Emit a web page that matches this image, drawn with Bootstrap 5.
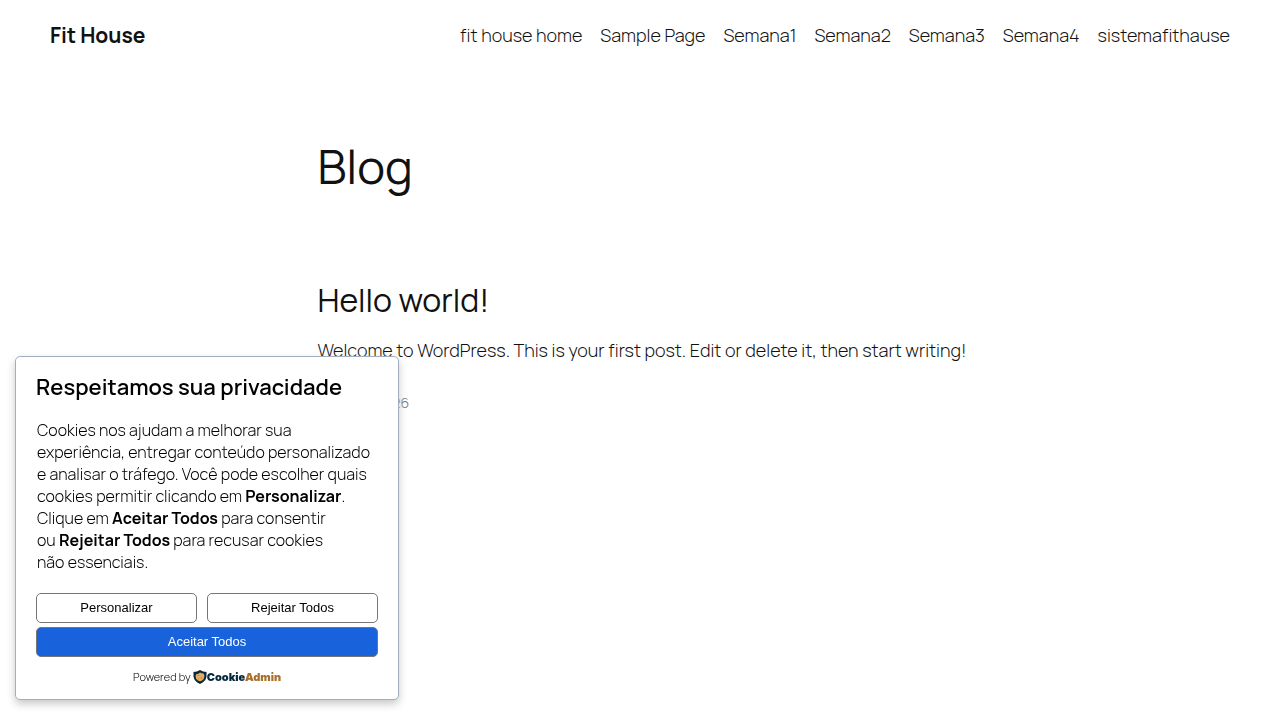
<!DOCTYPE html>
<html lang="pt-BR">
<head>
<meta charset="utf-8">
<meta name="viewport" content="width=device-width, initial-scale=1">
<title>Fit House</title>
<link href="https://cdn.jsdelivr.net/npm/bootstrap@5.3.0/dist/css/bootstrap.min.css" rel="stylesheet">
<style>
  body { font-family: Manrope, Inter, "Open Sans", sans-serif; font-size: 18px; font-weight: 300; line-height: 26px; color: #111; background: #fff; }
  a { color: inherit; text-decoration: none; }
  a:hover { text-decoration: underline; }
  .site-header { padding: 22px 50px; column-gap: 30px; }
  .site-title { font-size: 21px; font-weight: 700; line-height: 26px; }
  .site-menu { column-gap: 18px; }
  .site-main { max-width: 645px; padding-top: 67px; }
  .page-heading { font-size: 47px; font-weight: 400; line-height: 58px; margin-bottom: 85px; }
  .post-heading { font-size: 32px; font-weight: 400; line-height: 40px; margin-bottom: 17px; }
  .post-date { font-size: 14px; line-height: 22px; color: #686868; margin-top: 29px; }
  @media (min-width: 768px) { .post-text { white-space: nowrap; } }
  .consent { position: fixed; left: 15px; bottom: 20px; width: 30%; min-width: 384px; padding: 14px 20px 13px; color: #000; background: #fff; border: 1px solid #a2aebf; border-radius: 5px; box-shadow: 0 4px 9px #c8c8c8; }
  .consent-heading { font-size: 22px; font-weight: 600; line-height: 32px; margin-bottom: 16px; }
  .consent-text { font-size: 16px; line-height: 22px; margin-bottom: 20px; padding: 0 4px 0 1px; }
  .consent-text strong { font-weight: 700; }
  .consent-actions { column-gap: 10px; }
  .consent-btn { font: 400 13px/18px "Liberation Sans", Arial, sans-serif; padding: 5px 10px; border: 1px solid #767676; border-radius: 5px; color: #000; background: #fff; }
  .consent-btn.accept { color: #fff; background: #1863dc; margin-top: 4px; }
  .consent-btn:hover { border-color: #444; }
  .reject { flex: 1 1 10px; }
  .customize { width: 161px; }
  .powered { font-size: 11px; line-height: 18px; margin-top: 11px; column-gap: 2px; }
  .brand-name { font: 900 11px/18px Inter, sans-serif; color: #06283d; }
  .brand-name span { color: #a8702a; }
</style>
</head>
<body>
<header class="site-header d-flex flex-wrap align-items-center justify-content-between">
  <a class="site-title" href="#">Fit House</a>
  <nav class="site-menu d-flex flex-wrap justify-content-end" aria-label="Menu">
    <a href="#">fit house home</a>
    <a href="#">Sample Page</a>
    <a href="#">Semana1</a>
    <a href="#">Semana2</a>
    <a href="#">Semana3</a>
    <a href="#">Semana4</a>
    <a href="#">sistemafithause</a>
  </nav>
</header>
<main class="site-main mx-auto">
  <h1 class="page-heading">Blog</h1>
  <article>
    <h2 class="post-heading"><a href="#">Hello world!</a></h2>
    <p class="post-text mb-0">Welcome to WordPress. This is your first post. Edit or delete it, then start writing!</p>
    <p class="post-date mb-0"><a href="#">March 11, 2026</a></p>
  </article>
</main>
<section class="consent" aria-labelledby="consent-title">
  <h2 class="consent-heading" id="consent-title">Respeitamos sua privacidade</h2>
  <p class="consent-text">Cookies nos ajudam a melhorar sua experiência, entregar conteúdo personalizado e&nbsp;analisar o tráfego. Você pode escolher quais cookies permitir clicando em <strong>Personalizar</strong>. Clique em <strong>Aceitar Todos</strong> para consentir ou&nbsp;<strong>Rejeitar Todos</strong> para recusar cookies não&nbsp;essenciais.</p>
  <div class="consent-actions d-flex">
    <button type="button" class="consent-btn customize">Personalizar</button>
    <button type="button" class="consent-btn reject">Rejeitar Todos</button>
  </div>
  <button type="button" class="consent-btn accept w-100 d-block">Aceitar Todos</button>
  <div class="powered d-flex justify-content-center">
    <span>Powered by</span>
    <a class="d-flex align-items-center" href="#">
      <svg width="14" height="14" viewBox="0 0 26 28" aria-hidden="true"><path d="M13 0Q19 4 26 4V13Q25 22 13 28Q1 22 0 13V4Q7 4 13 0Z" fill="#06283d"/><path d="M13 5Q16 7 20 7L22 11Q22 18 17 21Q13 24 9 21Q4 18 4 12L6 8Q10 8 13 5Z" fill="#e5ad62"/><g fill="#bd8136"><circle cx="10" cy="11" r="1.5"/><circle cx="16" cy="16" r="1.5"/><circle cx="10" cy="18" r="1"/></g></svg>
      <span class="brand-name">Cookie<span>Admin</span></span>
    </a>
  </div>
</section>
<script src="https://cdn.jsdelivr.net/npm/bootstrap@5.3.0/dist/js/bootstrap.bundle.min.js"></script>
</body>
</html>
